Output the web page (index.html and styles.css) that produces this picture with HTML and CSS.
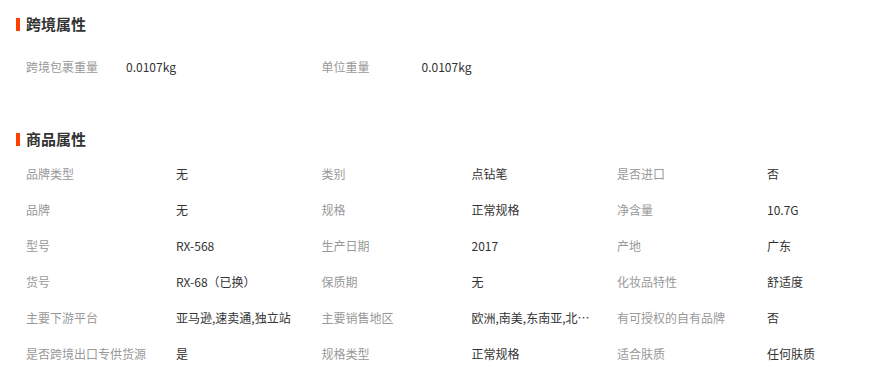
FILE: index.html
```html
<!DOCTYPE html>
<html lang="zh-CN">
<head>
<meta charset="utf-8">
<title>属性</title>
<link rel="stylesheet" href="styles.css">
</head>
<body>
<section class="block block-cross">
  <h2 class="block-title"><span class="bar"></span>跨境属性</h2>
  <div class="attr-grid cross">
    <div class="attr"><span class="label">跨境包裹重量</span><span class="value">0.0107kg</span></div>
    <div class="attr"><span class="label">单位重量</span><span class="value">0.0107kg</span></div>
  </div>
</section>
<section class="block block-goods">
  <h2 class="block-title"><span class="bar"></span>商品属性</h2>
  <div class="attr-grid goods">
    <div class="attr"><span class="label">品牌类型</span><span class="value">无</span></div>
    <div class="attr"><span class="label">类别</span><span class="value">点钻笔</span></div>
    <div class="attr"><span class="label">是否进口</span><span class="value">否</span></div>
    <div class="attr"><span class="label">品牌</span><span class="value">无</span></div>
    <div class="attr"><span class="label">规格</span><span class="value">正常规格</span></div>
    <div class="attr"><span class="label">净含量</span><span class="value">10.7G</span></div>
    <div class="attr"><span class="label">型号</span><span class="value">RX-568</span></div>
    <div class="attr"><span class="label">生产日期</span><span class="value">2017</span></div>
    <div class="attr"><span class="label">产地</span><span class="value">广东</span></div>
    <div class="attr"><span class="label">货号</span><span class="value">RX-68（已换）</span></div>
    <div class="attr"><span class="label">保质期</span><span class="value">无</span></div>
    <div class="attr"><span class="label">化妆品特性</span><span class="value">舒适度</span></div>
    <div class="attr"><span class="label">主要下游平台</span><span class="value">亚马逊,速卖通,独立站</span></div>
    <div class="attr"><span class="label">主要销售地区</span><span class="value">欧洲,南美,东南亚,北…</span></div>
    <div class="attr"><span class="label">有可授权的自有品牌</span><span class="value">否</span></div>
    <div class="attr"><span class="label">是否跨境出口专供货源</span><span class="value">是</span></div>
    <div class="attr"><span class="label">规格类型</span><span class="value">正常规格</span></div>
    <div class="attr"><span class="label">适合肤质</span><span class="value">任何肤质</span></div>
  </div>
</section>
</body>
</html>
```
FILE: styles.css
```css
html, body {
  margin: 0;
  padding: 0;
  background: #fff;
}
body {
  width: 882px;
  overflow: hidden;
  font-family: "Noto Sans CJK SC", "Microsoft YaHei", sans-serif;
  font-size: 12px;
  color: #333;
}
.block-title {
  display: flex;
  align-items: center;
  gap: 6px;
  margin: 0;
  padding-left: 16px;
  height: 20px;
  line-height: 20px;
  font-size: 15px;
  font-weight: bold;
  color: #333;
}
.bar {
  width: 4px;
  height: 13px;
  background: #ff4000;
}
.block-cross {
  padding-top: 14px;
}
.block-cross .block-title {
  margin-bottom: 15px;
}
.block-goods {
  padding-top: 44px;
}
.block-goods .block-title {
  margin-bottom: 7px;
}
.attr-grid {
  display: grid;
  grid-template-columns: repeat(3, 295.5px);
  grid-auto-rows: 36px;
  padding-left: 26px;
}
.attr {
  display: flex;
  align-items: center;
  line-height: 18px;
  white-space: nowrap;
}
.label {
  color: #999;
  flex: none;
  width: 150px;
}
.cross .label {
  width: 100px;
}
.value {
  color: #333;
}
```
